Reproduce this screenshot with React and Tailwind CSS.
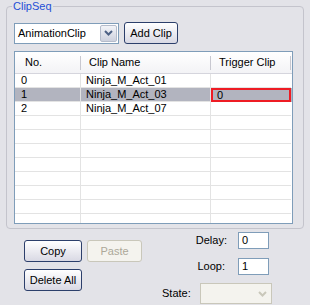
import React from "react";

const rows = [
  { no: "0", name: "Ninja_M_Act_01", trigger: "" },
  { no: "1", name: "Ninja_M_Act_03", trigger: "0", selected: true },
  { no: "2", name: "Ninja_M_Act_07", trigger: "" },
];

function Chevron({ color = "#4d6185" }) {
  return (
    <svg width="9" height="6" viewBox="0 0 9 6">
      <polyline points="1,1 4.5,4.5 8,1" fill="none" stroke={color} strokeWidth="2" />
    </svg>
  );
}

function Button({ children, disabled, className = "" }) {
  return (
    <button
      disabled={disabled}
      className={
        "h-[22px] rounded-[3px] border text-[11px] leading-none " +
        (disabled
          ? "border-[#c9c7ba] bg-[#f4f3ee] text-[#aca899] "
          : "border-[#2c3f6b] bg-gradient-to-b from-white to-[#d9d9e4] text-black ") +
        className
      }
    >
      {children}
    </button>
  );
}

export default function App() {
  const empty = Array.from({ length: 8 });

  return (
    <div
      className="w-[310px] h-[305px] bg-[#e3e3e8] overflow-hidden text-[11px] text-black"
      style={{ fontFamily: '"Liberation Sans", Arial, sans-serif' }}
    >
      <div className="pt-[6px] pl-[6px]">
        <div className="relative w-[298px] h-[223px] rounded-[4px] border border-[#c4c4cc] pl-[7px] pt-[15px]">
          <span className="absolute left-[5px] top-[-8px] bg-[#e3e3e8] px-[1px] text-[11px] leading-[14px] text-[#1f4fd6]">
            ClipSeq
          </span>

          <div className="flex items-center gap-[5px]">
            <div className="flex h-[21px] w-[105px] items-center border border-[#7f9db9] bg-white">
              <span className="flex-1 pl-[3px]">AnimationClip</span>
              <div className="m-[1px] flex h-[17px] w-[17px] items-center justify-center rounded-[2px] border border-[#b5bccb] bg-gradient-to-b from-[#f3f4f8] to-[#cdd1de]">
                <Chevron />
              </div>
            </div>
            <Button className="w-[54px] h-[20px]">Add Clip</Button>
          </div>

          <div className="mt-[7px] h-[173px] w-[279px] overflow-hidden border border-[#7f9db9] bg-white">
            <div className="flex h-[22px] items-center border-b border-[#d5d5dd] bg-gradient-to-b from-white to-[#f3f3f6]">
              <div className="flex w-[66px] items-center pl-[10px]">
                <span className="flex-1">No.</span>
                <span className="h-[14px] w-px bg-[#c8c8d0]" />
              </div>
              <div className="flex w-[130px] items-center pl-[8px]">
                <span className="flex-1">Clip Name</span>
                <span className="h-[14px] w-px bg-[#c8c8d0]" />
              </div>
              <div className="flex w-[80px] items-center pl-[8px]">
                <span className="flex-1">Trigger Clip</span>
                <span className="h-[14px] w-px bg-[#c8c8d0]" />
              </div>
            </div>

            {rows.map((r) => (
              <div
                key={r.no}
                className={"flex h-[14px] items-center " + (r.selected ? "bg-[#b2b4bf]" : "")}
              >
                <div className="h-full w-[66px] border-r border-b border-[#e3e3e3] pl-[6px] leading-[13px]">{r.no}</div>
                <div className="h-full w-[130px] border-r border-b border-[#e3e3e3] pl-[5px] leading-[13px]">{r.name}</div>
                {r.selected ? (
                  <div className="h-full w-[80px] border-2 border-[#ee1c24] pl-[4px] leading-[11px]">{r.trigger}</div>
                ) : (
                  <div className="h-full w-[80px] border-b border-[#e3e3e3] pl-[5px] leading-[13px]">{r.trigger}</div>
                )}
              </div>
            ))}

            {empty.map((_, i) => (
              <div key={i} className="flex h-[14px]">
                <div className="h-full w-[66px] border-r border-b border-[#e3e3e3]" />
                <div className="h-full w-[130px] border-r border-b border-[#e3e3e3]" />
                <div className="h-full w-[80px] border-b border-[#e3e3e3]" />
              </div>
            ))}
          </div>
        </div>
      </div>

      <div className="flex">
        <div className="flex flex-col gap-[7px] pl-[24px] pt-[11px]">
          <div className="flex gap-[5px]">
            <Button className="w-[58px]">Copy</Button>
            <Button className="w-[55px]" disabled>
              Paste
            </Button>
          </div>
          <Button className="w-[58px]">Delete All</Button>
        </div>

        <div className="ml-[18px] flex flex-col pt-[3px]">
          <div className="flex items-center">
            <span className="w-[67px] text-right">Delay:</span>
            <div className="ml-[11px] flex h-[17px] w-[31px] items-center border border-[#7f9db9] bg-white pl-[3px]">0</div>
          </div>
          <div className="mt-[9px] flex items-center">
            <span className="w-[65px] text-right">Loop:</span>
            <div className="ml-[13px] flex h-[17px] w-[31px] items-center border border-[#7f9db9] bg-white pl-[3px]">1</div>
          </div>
          <div className="mt-[8px] flex items-center">
            <span className="w-[40px] pl-[2px]">State:</span>
            <div className="flex h-[21px] w-[72px] items-center justify-end border border-[#c9c7ba] bg-[#f4f3ee]">
              <div className="m-[1px] flex h-[17px] w-[16px] items-center justify-center">
                <Chevron color="#c9c7ba" />
              </div>
            </div>
          </div>
        </div>
      </div>
    </div>
  );
}
